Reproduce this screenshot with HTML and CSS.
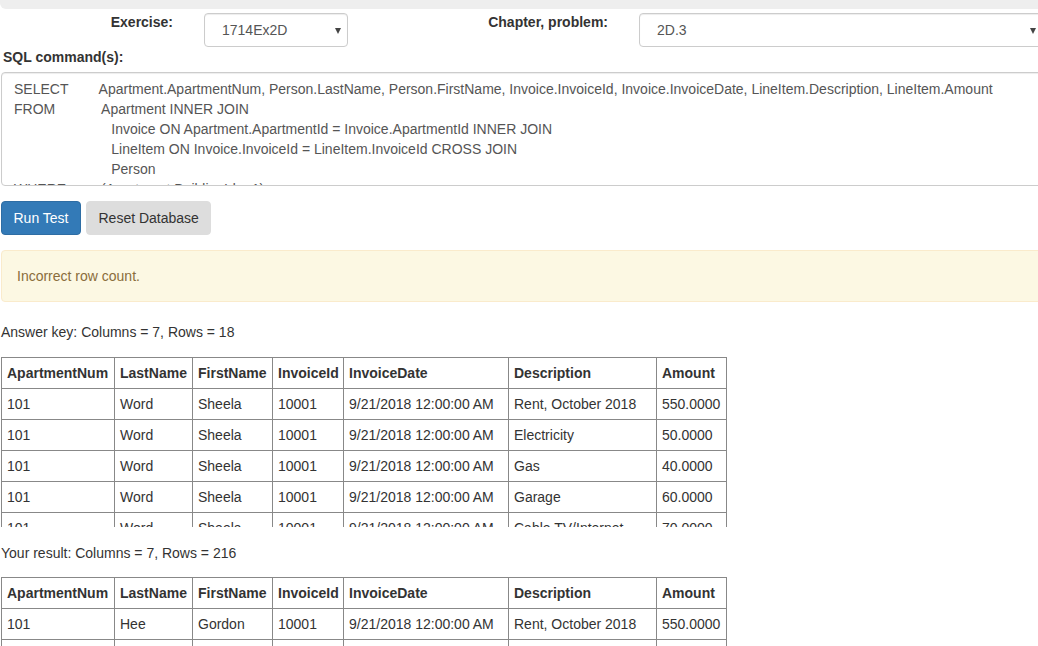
FILE: index.html
```html
<!DOCTYPE html>
<html lang="en">
<head>
<meta charset="utf-8">
<title>SQL Exercise</title>
<link rel="stylesheet" href="styles.css">
</head>
<body>
<div class="topbar"></div>
<div class="page">
  <div class="form-row">
    <label class="ctl-label">Exercise:</label>
    <div class="ctl-col">
      <div class="select-wrap select-sm">
        <select class="form-select"><option>1714Ex2D</option></select>
      </div>
    </div>
    <label class="ctl-label">Chapter, problem:</label>
    <div class="ctl-col">
      <div class="select-wrap">
        <select class="form-select"><option>2D.3</option></select>
      </div>
    </div>
  </div>

  <label class="sql-label">SQL command(s):</label>
  <textarea class="sql-box" spellcheck="false">SELECT        Apartment.ApartmentNum, Person.LastName, Person.FirstName, Invoice.InvoiceId, Invoice.InvoiceDate, LineItem.Description, LineItem.Amount
FROM            Apartment INNER JOIN
                         Invoice ON Apartment.ApartmentId = Invoice.ApartmentId INNER JOIN
                         LineItem ON Invoice.InvoiceId = LineItem.InvoiceId CROSS JOIN
                         Person
WHERE         (Apartment.BuildingId = 1)</textarea>

  <div class="btn-row">
    <button class="btn btn-primary">Run Test</button>
    <button class="btn btn-default">Reset Database</button>
  </div>

  <div class="alert">Incorrect row count.</div>

  <p class="summary summary-first">Answer key: Columns = 7, Rows = 18</p>
  <div class="table-clip">
    <table class="grid">
      <colgroup>
        <col class="c1"><col class="c2"><col class="c3"><col class="c4"><col class="c5"><col class="c6"><col class="c7">
      </colgroup>
      <thead>
        <tr><th>ApartmentNum</th><th>LastName</th><th>FirstName</th><th>InvoiceId</th><th>InvoiceDate</th><th>Description</th><th>Amount</th></tr>
      </thead>
      <tbody>
        <tr><td>101</td><td>Word</td><td>Sheela</td><td>10001</td><td>9/21/2018 12:00:00 AM</td><td>Rent, October 2018</td><td>550.0000</td></tr>
        <tr><td>101</td><td>Word</td><td>Sheela</td><td>10001</td><td>9/21/2018 12:00:00 AM</td><td>Electricity</td><td>50.0000</td></tr>
        <tr><td>101</td><td>Word</td><td>Sheela</td><td>10001</td><td>9/21/2018 12:00:00 AM</td><td>Gas</td><td>40.0000</td></tr>
        <tr><td>101</td><td>Word</td><td>Sheela</td><td>10001</td><td>9/21/2018 12:00:00 AM</td><td>Garage</td><td>60.0000</td></tr>
        <tr><td>101</td><td>Word</td><td>Sheela</td><td>10001</td><td>9/21/2018 12:00:00 AM</td><td>Cable TV/Internet</td><td>70.0000</td></tr>
        <tr><td>102</td><td>Hee</td><td>Gordon</td><td>10002</td><td>9/21/2018 12:00:00 AM</td><td>Rent, October 2018</td><td>600.0000</td></tr>
      </tbody>
    </table>
  </div>

  <p class="summary summary-second">Your result: Columns = 7, Rows = 216</p>
  <div class="table-clip">
    <table class="grid">
      <colgroup>
        <col class="c1"><col class="c2"><col class="c3"><col class="c4"><col class="c5"><col class="c6"><col class="c7">
      </colgroup>
      <thead>
        <tr><th>ApartmentNum</th><th>LastName</th><th>FirstName</th><th>InvoiceId</th><th>InvoiceDate</th><th>Description</th><th>Amount</th></tr>
      </thead>
      <tbody>
        <tr><td>101</td><td>Hee</td><td>Gordon</td><td>10001</td><td>9/21/2018 12:00:00 AM</td><td>Rent, October 2018</td><td>550.0000</td></tr>
        <tr><td>101</td><td>Word</td><td>Sheela</td><td>10001</td><td>9/21/2018 12:00:00 AM</td><td>Rent, October 2018</td><td>550.0000</td></tr>
        <tr><td>101</td><td>Hee</td><td>Gordon</td><td>10001</td><td>9/21/2018 12:00:00 AM</td><td>Electricity</td><td>50.0000</td></tr>
      </tbody>
    </table>
  </div>
</div>
</body>
</html>
```

FILE: styles.css
```css
html, body {
  margin: 0;
  padding: 0;
  overflow: hidden;
  background: #fff;
}

body {
  font-family: "Liberation Sans", Arial, Helvetica, sans-serif;
  font-size: 14px;
  line-height: 20px;
  color: #333;
}

.topbar {
  height: 9px;
  width: 1060px;
  background: #eee;
  border-bottom-left-radius: 6px;
}

.page {
  width: 1042px;
  padding-left: 1px;
}

.form-row {
  display: grid;
  grid-template-columns: 188px 174px 261px 1fr;
  margin-top: 3px;
}

.ctl-label {
  font-weight: bold;
  text-align: right;
  padding-right: 16px;
  line-height: 20px;
}

.ctl-col {
  padding-left: 15px;
  padding-top: 1px;
}

.select-wrap {
  position: relative;
}

.select-sm {
  width: 144px;
}

.select-wrap::after {
  content: "";
  position: absolute;
  right: 7px;
  top: 15px;
  width: 0;
  height: 0;
  border-left: 3.5px solid transparent;
  border-right: 3.5px solid transparent;
  border-top: 6px solid #444;
}

.form-select {
  -webkit-appearance: none;
  appearance: none;
  display: block;
  width: 100%;
  height: 34px;
  box-sizing: border-box;
  padding: 6px 12px 6px 17px;
  font-family: inherit;
  font-size: 14px;
  color: #555;
  background: #fff;
  border: 1px solid #ccc;
  border-radius: 4px;
  box-shadow: inset 0 1px 1px rgba(0, 0, 0, 0.075);
}

.sql-label {
  display: block;
  font-weight: bold;
  margin: 0 0 5px 2px;
}

.sql-box {
  display: block;
  width: 100%;
  height: 114px;
  box-sizing: border-box;
  margin: 0;
  padding: 6px 12px;
  font-family: inherit;
  font-size: 14px;
  line-height: 20px;
  color: #555;
  border: 1px solid #ccc;
  border-radius: 4px;
  box-shadow: inset 0 1px 1px rgba(0, 0, 0, 0.075);
  white-space: pre;
  overflow: hidden;
  resize: none;
}

.btn-row {
  display: flex;
  gap: 5px;
  margin-top: 15px;
}

.btn {
  height: 34px;
  padding: 6px 11.5px;
  font-family: inherit;
  font-size: 14px;
  line-height: 20px;
  white-space: nowrap;
  border-radius: 4px;
  border: 1px solid transparent;
  box-sizing: border-box;
}

.btn-primary {
  background: #337ab7;
  border-color: #2e6da4;
  color: #fff;
}

.btn-default {
  background: #ddd;
  border-color: #ddd;
  color: #333;
}

.alert {
  margin-top: 15px;
  padding: 15px;
  background: #fcf8e3;
  border: 1px solid #faebcc;
  border-radius: 4px;
  color: #8a6d3b;
  margin-bottom: 20px;
}

.summary {
  margin: 0;
}

.summary-first {
  margin-bottom: 15px;
}

.summary-second {
  margin-top: 16px;
  margin-bottom: 14px;
}

.table-clip {
  height: 170px;
  overflow: hidden;
}

.grid {
  border-collapse: collapse;
  table-layout: fixed;
  width: 726px;
}

.grid th,
.grid td {
  border: 1px solid #888;
  padding: 5px;
  text-align: left;
  white-space: nowrap;
  overflow: hidden;
}

.grid th {
  font-weight: bold;
}

.c1 { width: 113px; }
.c2 { width: 78px; }
.c3 { width: 80px; }
.c4 { width: 71px; }
.c5 { width: 165px; }
.c6 { width: 148px; }
.c7 { width: 70px; }
```
